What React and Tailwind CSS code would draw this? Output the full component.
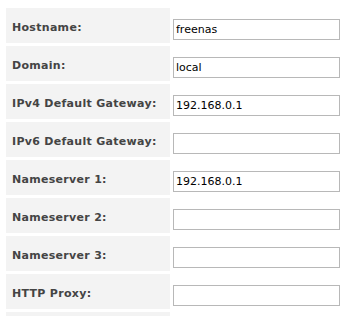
const rows = [
  { label: 'Hostname:', value: 'freenas' },
  { label: 'Domain:', value: 'local' },
  { label: 'IPv4 Default Gateway:', value: '192.168.0.1' },
  { label: 'IPv6 Default Gateway:', value: '' },
  { label: 'Nameserver 1:', value: '192.168.0.1' },
  { label: 'Nameserver 2:', value: '' },
  { label: 'Nameserver 3:', value: '' },
  { label: 'HTTP Proxy:', value: '' },
  { label: '', value: '' },
];

export default function App() {
  return (
    <div className="w-[352px] h-[316px] overflow-hidden bg-white pl-[6px] pt-[8px] font-['DejaVu_Sans',Verdana,sans-serif]">
      <div className="flex flex-col gap-[3px]">
        {rows.map((row, i) => (
          <div key={i} className="flex h-[35px] shrink-0">
            <div className="w-[164px] bg-[#f3f3f3] flex items-center pl-[6px] pt-[6px] text-[11px] font-bold tracking-[0.3px] text-[#444444]">
              {row.label}
            </div>
            {row.label && (
              <div className="ml-[3px] pt-[8px]">
                <input
                  type="text"
                  defaultValue={row.value}
                  className="w-[167px] h-[21px] border border-[#b8b8b8] bg-white px-[2px] text-[11px] text-black outline-none font-['DejaVu_Sans',Verdana,sans-serif]"
                />
              </div>
            )}
          </div>
        ))}
      </div>
    </div>
  );
}
